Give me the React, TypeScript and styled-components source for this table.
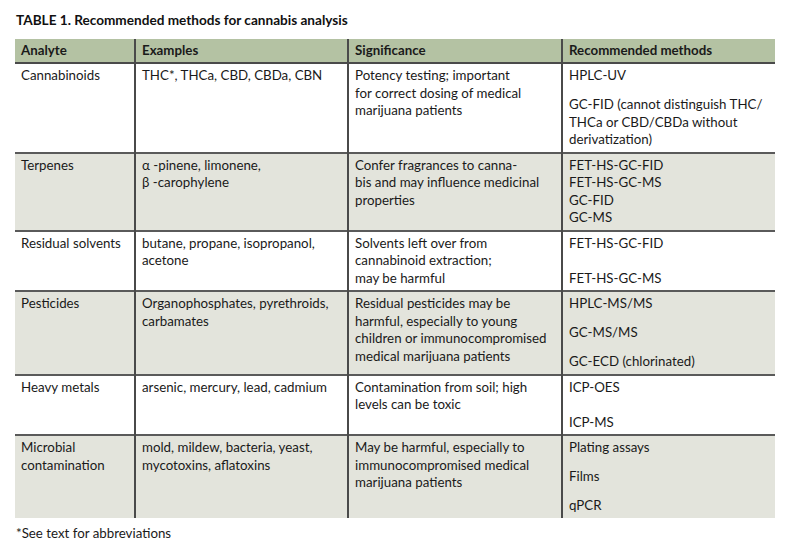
import React from "react";
import styled, { createGlobalStyle } from "styled-components";

const Global = createGlobalStyle`
  html, body { margin: 0; padding: 0; background: #ffffff; }
  body { font-family: Lato, "Open Sans", "Liberation Sans", sans-serif; color: #1a1a1a; }
`;

type Row = {
  analyte: string[];
  examples: string[];
  significance: string[];
  methods: { lines: string[]; gap?: boolean; blank?: boolean }[];
  shaded?: boolean;
};

const rows: Row[] = [
  {
    analyte: ["Cannabinoids"],
    examples: ["THC*, THCa, CBD, CBDa, CBN"],
    significance: ["Potency testing; important", "for correct dosing of medical", "marijuana patients"],
    methods: [
      { lines: ["HPLC-UV"] },
      { lines: ["GC-FID (cannot distinguish THC/", "THCa or CBD/CBDa without", "derivatization)"], gap: true },
    ],
  },
  {
    analyte: ["Terpenes"],
    examples: ["α -pinene, limonene,", "β -carophylene"],
    significance: ["Confer fragrances to canna-", "bis and may influence medicinal", "properties"],
    methods: [
      { lines: ["FET-HS-GC-FID"] },
      { lines: ["FET-HS-GC-MS"] },
      { lines: ["GC-FID"] },
      { lines: ["GC-MS"] },
    ],
    shaded: true,
  },
  {
    analyte: ["Residual solvents"],
    examples: ["butane, propane, isopropanol,", "acetone"],
    significance: ["Solvents left over from", "cannabinoid extraction;", "may be harmful"],
    methods: [{ lines: ["FET-HS-GC-FID"] }, { lines: ["FET-HS-GC-MS"], blank: true }],
  },
  {
    analyte: ["Pesticides"],
    examples: ["Organophosphates, pyrethroids,", "carbamates"],
    significance: [
      "Residual pesticides may be",
      "harmful, especially to young",
      "children or immunocompromised",
      "medical marijuana patients",
    ],
    methods: [
      { lines: ["HPLC-MS/MS"] },
      { lines: ["GC-MS/MS"], gap: true },
      { lines: ["GC-ECD (chlorinated)"], gap: true },
    ],
    shaded: true,
  },
  {
    analyte: ["Heavy metals"],
    examples: ["arsenic, mercury, lead, cadmium"],
    significance: ["Contamination from soil; high", "levels can be toxic"],
    methods: [{ lines: ["ICP-OES"] }, { lines: ["ICP-MS"], blank: true }],
  },
  {
    analyte: ["Microbial", "contamination"],
    examples: ["mold, mildew, bacteria, yeast,", "mycotoxins, aflatoxins"],
    significance: ["May be harmful, especially to", "immunocompromised medical", "marijuana patients"],
    methods: [
      { lines: ["Plating assays"] },
      { lines: ["Films"], gap: true },
      { lines: ["qPCR"], gap: true },
    ],
    shaded: true,
  },
];

const Page = styled.div`
  padding: 11px 25px 0 15px;
  width: 760px;
`;

const Title = styled.h1`
  margin: 0 0 0 1px;
  height: 28px;
  font-size: 13.6px;
  line-height: 19px;
  font-weight: 700;
  color: #111;
`;

const Table = styled.table`
  width: 760px;
  border-collapse: collapse;
  table-layout: fixed;
  font-size: 13.3px;
  line-height: 17.5px;
`;

const HeadRow = styled.tr`
  background: #b4c2a3;
  border-bottom: 2px solid #4a4a4a;
`;

const BodyRow = styled.tr<{ $shaded?: boolean }>`
  background: ${(p) => (p.$shaded ? "#e3e4dc" : "#ffffff")};
  & + & {
    border-top: 2px solid #5a5a5a;
  }
`;

const HeadCell = styled.th`
  text-align: left;
  font-weight: 700;
  padding: 3px 6px 2.5px 6px;
  vertical-align: middle;
  & + & {
    border-left: 2px solid #4a4a4a;
  }
`;

const Cell = styled.td`
  padding: 3px 6px 3px 6px;
  vertical-align: top;
  & + & {
    border-left: 2px solid #4a4a4a;
  }
`;

const Line = styled.div`
  white-space: nowrap;
`;

const Method = styled.div<{ $gap?: boolean; $blank?: boolean }>`
  margin-top: ${(p) => (p.$gap ? "11.5px" : p.$blank ? "17.5px" : "0")};
`;

const Footnote = styled.p`
  margin: 7px 0 0 1px;
  font-size: 13.3px;
  line-height: 17px;
`;

const Lines = ({ lines }: { lines: string[] }) => (
  <>
    {lines.map((l, i) => (
      <Line key={i}>{l}</Line>
    ))}
  </>
);

export default function App() {
  return (
    <>
      <Global />
      <Page>
        <Title>TABLE 1. Recommended methods for cannabis analysis</Title>
        <Table>
          <colgroup>
            <col style={{ width: 120 }} />
            <col style={{ width: 213 }} />
            <col style={{ width: 214 }} />
            <col style={{ width: 213 }} />
          </colgroup>
          <thead>
            <HeadRow>
              <HeadCell>Analyte</HeadCell>
              <HeadCell>Examples</HeadCell>
              <HeadCell>Significance</HeadCell>
              <HeadCell>Recommended methods</HeadCell>
            </HeadRow>
          </thead>
          <tbody>
            {rows.map((r, i) => (
              <BodyRow key={i} $shaded={r.shaded}>
                <Cell>
                  <Lines lines={r.analyte} />
                </Cell>
                <Cell>
                  <Lines lines={r.examples} />
                </Cell>
                <Cell>
                  <Lines lines={r.significance} />
                </Cell>
                <Cell>
                  {r.methods.map((m, j) => (
                    <Method key={j} $gap={m.gap} $blank={m.blank}>
                      <Lines lines={m.lines} />
                    </Method>
                  ))}
                </Cell>
              </BodyRow>
            ))}
          </tbody>
        </Table>
        <Footnote>*See text for abbreviations</Footnote>
      </Page>
    </>
  );
}
